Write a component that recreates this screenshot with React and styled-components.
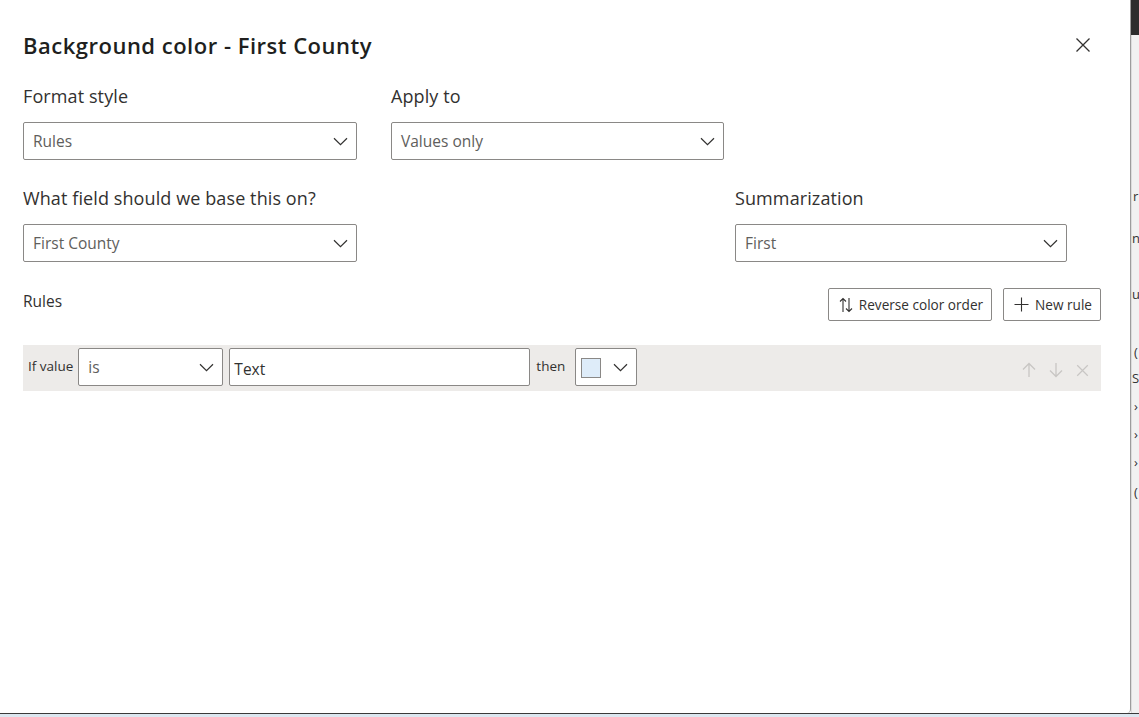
import React from "react";
import styled, { createGlobalStyle } from "styled-components";

const GlobalStyle = createGlobalStyle`
  html, body {
    margin: 0;
    padding: 0;
    background: #ffffff;
  }
  body {
    font-family: "Open Sans", "Noto Sans", "Liberation Sans", sans-serif;
    color: #323130;
  }
  * {
    box-sizing: border-box;
  }
`;

const Page = styled.div`
  width: 1139px;
  height: 717px;
  display: flex;
  flex-direction: column;
  overflow: hidden;
`;

const Main = styled.div`
  flex: 1;
  display: flex;
  min-height: 0;
`;

const Taskbar = styled.div`
  height: 4px;
  border-top: 1px solid #3a3a3a;
  background: #dce7f0;
`;

const Dialog = styled.div`
  width: 1131px;
  background: #ffffff;
  border-right: 1px solid #9c9c9c;
  border-bottom-right-radius: 4px;
  padding: 31px 29px 0 23px;
  display: flex;
  flex-direction: column;
`;

const SidePane = styled.div`
  flex: 1;
  display: flex;
  flex-direction: column;
  background: #f1f1f1;
  overflow: hidden;
`;

const SideHeader = styled.div`
  height: 35px;
  background: #2d2d2d;
  flex-shrink: 0;
`;

const SideBody = styled.div`
  flex: 1;
  border-left: 1px solid #dcdcdc;
  display: flex;
  flex-direction: column;
  padding-top: 152px;
`;

const SideText = styled.div`
  font-size: 13px;
  line-height: 18px;
  color: #333;
  white-space: nowrap;
  margin-left: ${p => p.$shift}px;
  margin-top: ${p => p.$gap}px;
`;

const Header = styled.div`
  display: flex;
  align-items: center;
  justify-content: space-between;
  height: 28px;
`;

const Title = styled.h1`
  margin: 0;
  font-size: 22px;
  font-weight: 600;
  color: #201f1e;
  letter-spacing: 0.5px;
`;

const CloseButton = styled.button`
  border: none;
  background: transparent;
  padding: 0;
  margin-right: 10px;
  width: 16px;
  height: 16px;
  display: flex;
  align-items: center;
  justify-content: center;
  cursor: pointer;
`;

const FieldRow = styled.div`
  display: flex;
  margin-top: ${p => p.$top}px;
`;

const Field = styled.div`
  width: ${p => p.$width}px;
  margin-left: ${p => p.$offset || 0}px;
  display: flex;
  flex-direction: column;
  gap: 14px;
`;

const Label = styled.label`
  font-size: 18px;
  line-height: 24px;
  color: #323130;
  letter-spacing: 0.1px;
  white-space: nowrap;
`;

const Select = styled.div`
  height: 38px;
  border: 1px solid #8a8886;
  border-radius: 2px;
  background: #fff;
  display: flex;
  align-items: center;
  justify-content: space-between;
  padding: 0 8px 0 ${p => p.$padLeft || 9}px;
  font-size: 15.5px;
  color: #605e5c;
  width: ${p => (p.$width ? `${p.$width}px` : "auto")};
  flex-shrink: 0;
`;

const RulesBar = styled.div`
  display: flex;
  align-items: center;
  justify-content: space-between;
  margin-top: 26px;
  height: 33px;
`;

const RulesLabel = styled.span`
  font-size: 15.5px;
  color: #323130;
  margin-top: -7px;
`;

const ButtonGroup = styled.div`
  display: flex;
  gap: 11px;
`;

const OutlineButton = styled.button`
  height: 33px;
  border: 1px solid #8a8886;
  border-radius: 2px;
  background: #fff;
  display: flex;
  align-items: center;
  gap: 6px;
  padding: 0 8px 0 10px;
  font-family: inherit;
  font-size: 13.6px;
  color: #323130;
  cursor: pointer;
`;

const RuleRow = styled.div`
  margin-top: 24px;
  height: 46px;
  background: #edebe9;
  display: flex;
  align-items: flex-start;
  padding: 3px 12px 0 5px;
`;

const RuleText = styled.span`
  font-size: 13.5px;
  color: #323130;
  line-height: 38px;
  margin: -1px ${p => p.$right}px 0 0;
`;

const TextInput = styled.div`
  width: 301px;
  height: 38px;
  border: 1px solid #8a8886;
  border-radius: 2px;
  background: #fff;
  display: flex;
  align-items: center;
  padding: 3px 4px 0;
  font-size: 15.5px;
  color: #323130;
  margin: 0 6px 0 6px;
`;

const Swatch = styled.span`
  width: 20px;
  height: 20px;
  background: #deecf9;
  border: 1px solid #8a8886;
  margin-top: 2px;
`;

const RowActions = styled.div`
  margin-left: auto;
  display: flex;
  gap: 13px;
  height: 38px;
  align-items: center;
  margin-top: 3px;
`;

const Chevron = () => (
  <svg width="15" height="9" viewBox="0 0 15 9" fill="none">
    <path d="M1 1.2 7.5 7.6 14 1.2" stroke="#323130" strokeWidth="1.2" />
  </svg>
);

const CloseIcon = ({ size = 16, color = "#323130", width = 1.3 }) => (
  <svg width={size} height={size} viewBox="0 0 16 16" fill="none">
    <path d="M1.5 1.5 14.5 14.5M14.5 1.5 1.5 14.5" stroke={color} strokeWidth={width} />
  </svg>
);

const SortIcon = () => (
  <svg width="14" height="16" viewBox="0 0 14 16" fill="none">
    <path d="M4 15V1.5M1 4.5 4 1.5 7 4.5" stroke="#323130" strokeWidth="1.1" />
    <path d="M10 1v13.5M7 11.5l3 3 3-3" stroke="#323130" strokeWidth="1.1" />
  </svg>
);

const PlusIcon = () => (
  <svg width="15" height="15" viewBox="0 0 15 15" fill="none">
    <path d="M7.5 0.5v14M0.5 7.5h14" stroke="#323130" strokeWidth="1.1" />
  </svg>
);

const ArrowIcon = ({ down }) => (
  <svg width="14" height="16" viewBox="0 0 14 16" fill="none" style={{ transform: down ? "rotate(180deg)" : "none" }}>
    <path d="M7 15V1.5M1 7.5l6-6 6 6" stroke="#c8c6c4" strokeWidth="1.3" />
  </svg>
);

const Dropdown = ({ value, width }) => (
  <Select $width={width}>
    <span>{value}</span>
    <Chevron />
  </Select>
);

export default function App() {
  return (
    <Page>
      <GlobalStyle />
      <Main>
        <Dialog>
          <Header>
            <Title>Background color - First County</Title>
            <CloseButton aria-label="Close">
              <CloseIcon />
            </CloseButton>
          </Header>

          <FieldRow $top={25}>
            <Field $width={334}>
              <Label>Format style</Label>
              <Dropdown value="Rules" />
            </Field>
            <Field $width={333} $offset={34}>
              <Label>Apply to</Label>
              <Dropdown value="Values only" />
            </Field>
          </FieldRow>

          <FieldRow $top={26}>
            <Field $width={334}>
              <Label>What field should we base this on?</Label>
              <Dropdown value="First County" />
            </Field>
            <Field $width={332} $offset={378}>
              <Label>Summarization</Label>
              <Dropdown value="First" />
            </Field>
          </FieldRow>

          <RulesBar>
            <RulesLabel>Rules</RulesLabel>
            <ButtonGroup>
              <OutlineButton>
                <SortIcon />
                Reverse color order
              </OutlineButton>
              <OutlineButton>
                <PlusIcon />
                New rule
              </OutlineButton>
            </ButtonGroup>
          </RulesBar>

          <RuleRow>
            <RuleText $right={5}>If value</RuleText>
            <Dropdown value="is" width={145} />
            <TextInput>Text</TextInput>
            <RuleText $right={10}>then</RuleText>
            <Select $width={62} $padLeft={5}>
              <Swatch />
              <Chevron />
            </Select>
            <RowActions>
              <ArrowIcon />
              <ArrowIcon down />
              <CloseIcon size={13} color="#c8c6c4" width={1.5} />
            </RowActions>
          </RuleRow>
        </Dialog>

        <SidePane>
          <SideHeader />
          <SideBody>
            <SideText $shift={1} $gap={0}>r</SideText>
            <SideText $shift={0} $gap={24}>n</SideText>
            <SideText $shift={0} $gap={38}>u</SideText>
            <SideText $shift={2} $gap={40}>(</SideText>
            <SideText $shift={0} $gap={8}>S</SideText>
            <SideText $shift={2} $gap={10}>›</SideText>
            <SideText $shift={2} $gap={10}>›</SideText>
            <SideText $shift={2} $gap={10}>›</SideText>
            <SideText $shift={2} $gap={12}>(</SideText>
          </SideBody>
        </SidePane>
      </Main>
      <Taskbar />
    </Page>
  );
}
